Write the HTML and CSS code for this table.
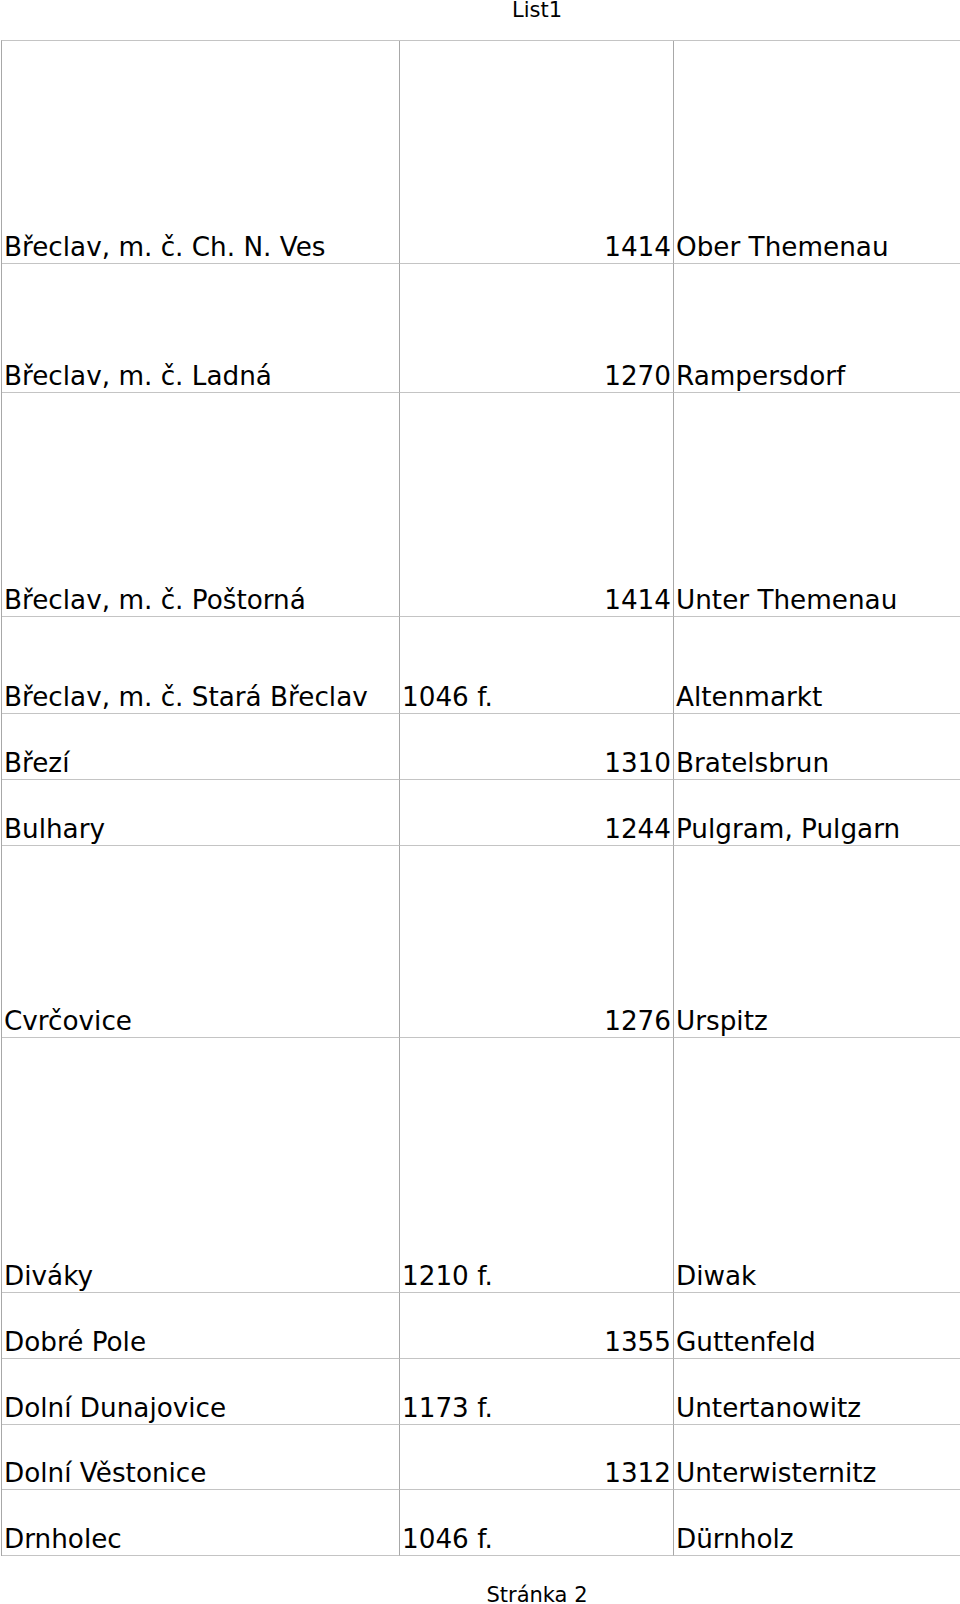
FILE: index.html
```
<!DOCTYPE html>
<html lang="cs">
<head>
<meta charset="utf-8">
<title>List1</title>
<link rel="stylesheet" href="styles.css">
</head>
<body>
<div class="page-title">List1</div>
<div class="sheet">
  <div class="cell">Břeclav, m. č. Ch. N. Ves</div><div class="cell num">1414</div><div class="cell last">Ober Themenau</div>
  <div class="cell">Břeclav, m. č. Ladná</div><div class="cell num">1270</div><div class="cell last">Rampersdorf</div>
  <div class="cell">Břeclav, m. č. Poštorná</div><div class="cell num">1414</div><div class="cell last">Unter Themenau</div>
  <div class="cell">Břeclav, m. č. Stará Břeclav</div><div class="cell">1046 f.</div><div class="cell last">Altenmarkt</div>
  <div class="cell">Březí</div><div class="cell num">1310</div><div class="cell last">Bratelsbrun</div>
  <div class="cell">Bulhary</div><div class="cell num">1244</div><div class="cell last">Pulgram, Pulgarn</div>
  <div class="cell">Cvrčovice</div><div class="cell num">1276</div><div class="cell last">Urspitz</div>
  <div class="cell">Diváky</div><div class="cell">1210 f.</div><div class="cell last">Diwak</div>
  <div class="cell">Dobré Pole</div><div class="cell num">1355</div><div class="cell last">Guttenfeld</div>
  <div class="cell">Dolní Dunajovice</div><div class="cell">1173 f.</div><div class="cell last">Untertanowitz</div>
  <div class="cell">Dolní Věstonice</div><div class="cell num">1312</div><div class="cell last">Unterwisternitz</div>
  <div class="cell">Drnholec</div><div class="cell">1046 f.</div><div class="cell last">Dürnholz</div>
</div>
<div class="page-footer">Stránka 2</div>
</body>
</html>
```
FILE: styles.css
```
html, body {
  margin: 0;
  padding: 0;
  background: #ffffff;
  color: #000000;
  font-family: "DejaVu Sans", sans-serif;
  overflow: hidden;
}

.page-title,
.page-footer {
  font-size: 21px;
  line-height: 20px;
  text-align: center;
  padding-left: 114px;
}

.page-title {
  height: 40px;
}

.page-footer {
  margin-top: 29px;
}

.sheet {
  display: grid;
  grid-template-columns: 398px 274px 1fr;
  grid-template-rows: 223px 129px 224px 97px 66px 66px 192px 255px 66px 66px 65px 66px;
  margin-left: 1px;
  border-top: 1px solid #c4c4c4;
  border-left: 1px solid #a8a8a8;
}

.cell {
  display: flex;
  align-items: flex-end;
  box-sizing: border-box;
  padding: 0 3px 1px 2px;
  font-size: 26.25px;
  white-space: nowrap;
  overflow: hidden;
  border-right: 1px solid #a8a8a8;
  border-bottom: 1px solid #c4c4c4;
}

.num {
  justify-content: flex-end;
  padding-right: 2px;
}

.last {
  border-right: none;
  padding-left: 2px;
}
```
